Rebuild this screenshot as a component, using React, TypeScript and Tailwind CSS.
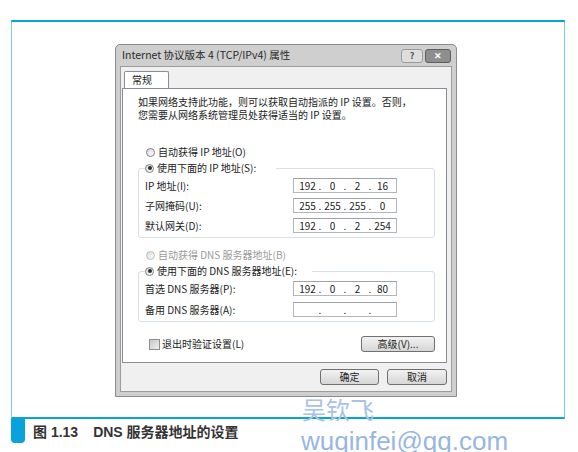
import { Fragment } from "react";

const cjk = "font-['Noto_Sans_CJK_SC','Noto_Sans',sans-serif]";

function Radio({ checked, disabled }: { checked?: boolean; disabled?: boolean }) {
  return (
    <span
      className={`flex h-[9px] w-[9px] shrink-0 items-center justify-center rounded-full border bg-linear-to-br from-[#d9d9d9] to-white ${
        disabled ? "border-[#bdbdbd]" : "border-[#7f7f7f]"
      }`}
    >
      {checked && <span className="h-[4px] w-[4px] rounded-full bg-[#2f2f2f]" />}
    </span>
  );
}

function IpBox({ parts }: { parts: string[] }) {
  return (
    <div className="flex h-[15px] w-[104px] items-center border border-[#b3b6bd] border-t-[#9ea1a8] bg-white px-[3px] text-[10px] leading-none text-[#222]">
      {parts.map((part, i) => (
        <Fragment key={i}>
          {i > 0 && <span className="w-[4px] text-center">.</span>}
          <span className="flex-1 text-center">{part}</span>
        </Fragment>
      ))}
    </div>
  );
}

function Row({ label, parts }: { label: string; parts: string[] }) {
  return (
    <div className="flex h-[15px] items-center">
      <span className="w-[148px] text-[10px] leading-none text-[#222]">{label}</span>
      <IpBox parts={parts} />
    </div>
  );
}

function WinButton({ label, className }: { label: string; className: string }) {
  return (
    <div
      className={`flex h-[16px] items-center justify-center rounded-[3px] border border-[#707070] bg-linear-to-b from-[#f2f2f2] to-[#d6d6d6] text-[10px] leading-none text-[#222] ${className}`}
    >
      {label}
    </div>
  );
}

function Dialog() {
  return (
    <div className={`flex h-[353px] w-[342px] flex-col rounded-t-[5px] border border-[#8c8c8c] bg-[#cfcfcf] ${cjk}`}>
      <div className="flex h-[21px] shrink-0 items-center justify-between pl-[6px] pr-[5px]">
        <span className="text-[10.5px] leading-none text-[#2a2a2a]">Internet 协议版本 4 (TCP/IPv4) 属性</span>
        <div className="flex gap-[2px]">
          <div className="flex h-[14px] w-[22px] items-center justify-center rounded-[3px] border border-[#9a9a9a] bg-[#dedede] text-[9px] font-bold leading-none text-[#555]">
            ?
          </div>
          <div className="flex h-[14px] w-[26px] items-center justify-center rounded-[3px] border border-[#5e5e5e] bg-[#8e8e8e] text-[9px] font-bold leading-none text-white">
            ✕
          </div>
        </div>
      </div>
      <div className="mx-[4px] mb-[4px] flex flex-1 flex-col border border-[#9c9c9c] bg-[#f0f0f0] pb-[5px] pl-[1px] pr-[4px] pt-[4px]">
        <div className="ml-[2px] flex h-[18px] w-[45px] items-start rounded-t-[2px] border border-b-0 border-[#898c95] bg-white pl-[7px] pt-[3px] text-[10px] leading-none text-[#222]">
          常规
        </div>
        <div className="-mt-px flex flex-col border border-[#898c95] bg-white pb-[10px] pl-[15px] pr-[11px] pt-[6px] text-[#222]">
          <p className="text-[10px] leading-[13px]">
            如果网络支持此功能，则可以获取自动指派的 IP 设置。否则，
            <br />
            您需要从网络系统管理员处获得适当的 IP 设置。
          </p>

          <div className="ml-[8px] mt-[24px] flex h-[14px] items-center gap-[3px] text-[10px] leading-none">
            <Radio />
            <span>自动获得 IP 地址(O)</span>
          </div>
          <fieldset className="mt-[2px] rounded-[3px] border border-[#d5dfe5] pb-[4px] pl-[6px] pr-[34px] pt-[3px]">
            <legend className="flex h-[14px] items-center gap-[3px] pr-[20px] text-[10px] leading-none">
              <Radio checked />
              <span>使用下面的 IP 地址(S):</span>
            </legend>
            <div className="flex flex-col gap-[5px]">
              <Row label="IP 地址(I):" parts={["192", "0", "2", "16"]} />
              <Row label="子网掩码(U):" parts={["255", "255", "255", "0"]} />
              <Row label="默认网关(D):" parts={["192", "0", "2", "254"]} />
            </div>
          </fieldset>

          <div className="ml-[8px] mt-[10px] flex h-[14px] items-center gap-[3px] text-[10px] leading-none text-[#9a9a9a]">
            <Radio disabled />
            <span>自动获得 DNS 服务器地址(B)</span>
          </div>
          <fieldset className="mt-[2px] rounded-[3px] border border-[#d5dfe5] pb-[4px] pl-[6px] pr-[34px] pt-[3px]">
            <legend className="flex h-[14px] items-center gap-[3px] pr-[15px] text-[10px] leading-none">
              <Radio checked />
              <span>使用下面的 DNS 服务器地址(E):</span>
            </legend>
            <div className="flex flex-col gap-[6px]">
              <Row label="首选 DNS 服务器(P):" parts={["192", "0", "2", "80"]} />
              <Row label="备用 DNS 服务器(A):" parts={["", "", "", ""]} />
            </div>
          </fieldset>

          <div className="mt-[14px] flex h-[16px] items-center justify-between pl-[11px]">
            <div className="flex items-center gap-[2px] text-[10px] leading-none">
              <span className="h-[11px] w-[11px] border border-[#8f8f8f] bg-linear-to-br from-[#c8c8c8] to-[#eeeeee]" />
              <span>退出时验证设置(L)</span>
            </div>
            <WinButton label="高级(V)..." className="w-[74px]" />
          </div>
        </div>
        <div className="mt-[6px] flex justify-end gap-[8px]">
          <WinButton label="确定" className="w-[59px]" />
          <WinButton label="取消" className="w-[60px]" />
        </div>
      </div>
    </div>
  );
}

export default function App() {
  return (
    <div className="relative h-[452px] w-[578px] overflow-hidden bg-white">
      <div className="ml-[11px] mt-[20px] h-[399px] w-[554px] border-x border-y-2 border-x-[#7cc8ea] border-y-[#0aa2dc] pl-[103px] pt-[22px]">
        <Dialog />
      </div>
      <div className="ml-[11px] flex items-start">
        <div className="h-[24px] w-[14px] rounded-b-[4px] bg-[#0aa2dc]" />
        <div className="ml-[8px] mt-[6px] flex gap-[15px] text-[14px] font-bold leading-none text-[#333] font-['Liberation_Sans','Noto_Sans_CJK_SC',sans-serif]">
          <span>图 1.13</span>
          <span>DNS 服务器地址的设置</span>
        </div>
      </div>

      <div className="pointer-events-none absolute left-[302px] top-[397px] text-[24px] leading-none text-[#a9c2e8] font-['Noto_Sans_CJK_SC',sans-serif]">
        吴钦飞
      </div>
      <div className="pointer-events-none absolute left-[301px] top-[428px] text-[26px] leading-none text-[#98b6e4] font-['Liberation_Sans',sans-serif]">
        wuqinfei@qq.com
      </div>
    </div>
  );
}
